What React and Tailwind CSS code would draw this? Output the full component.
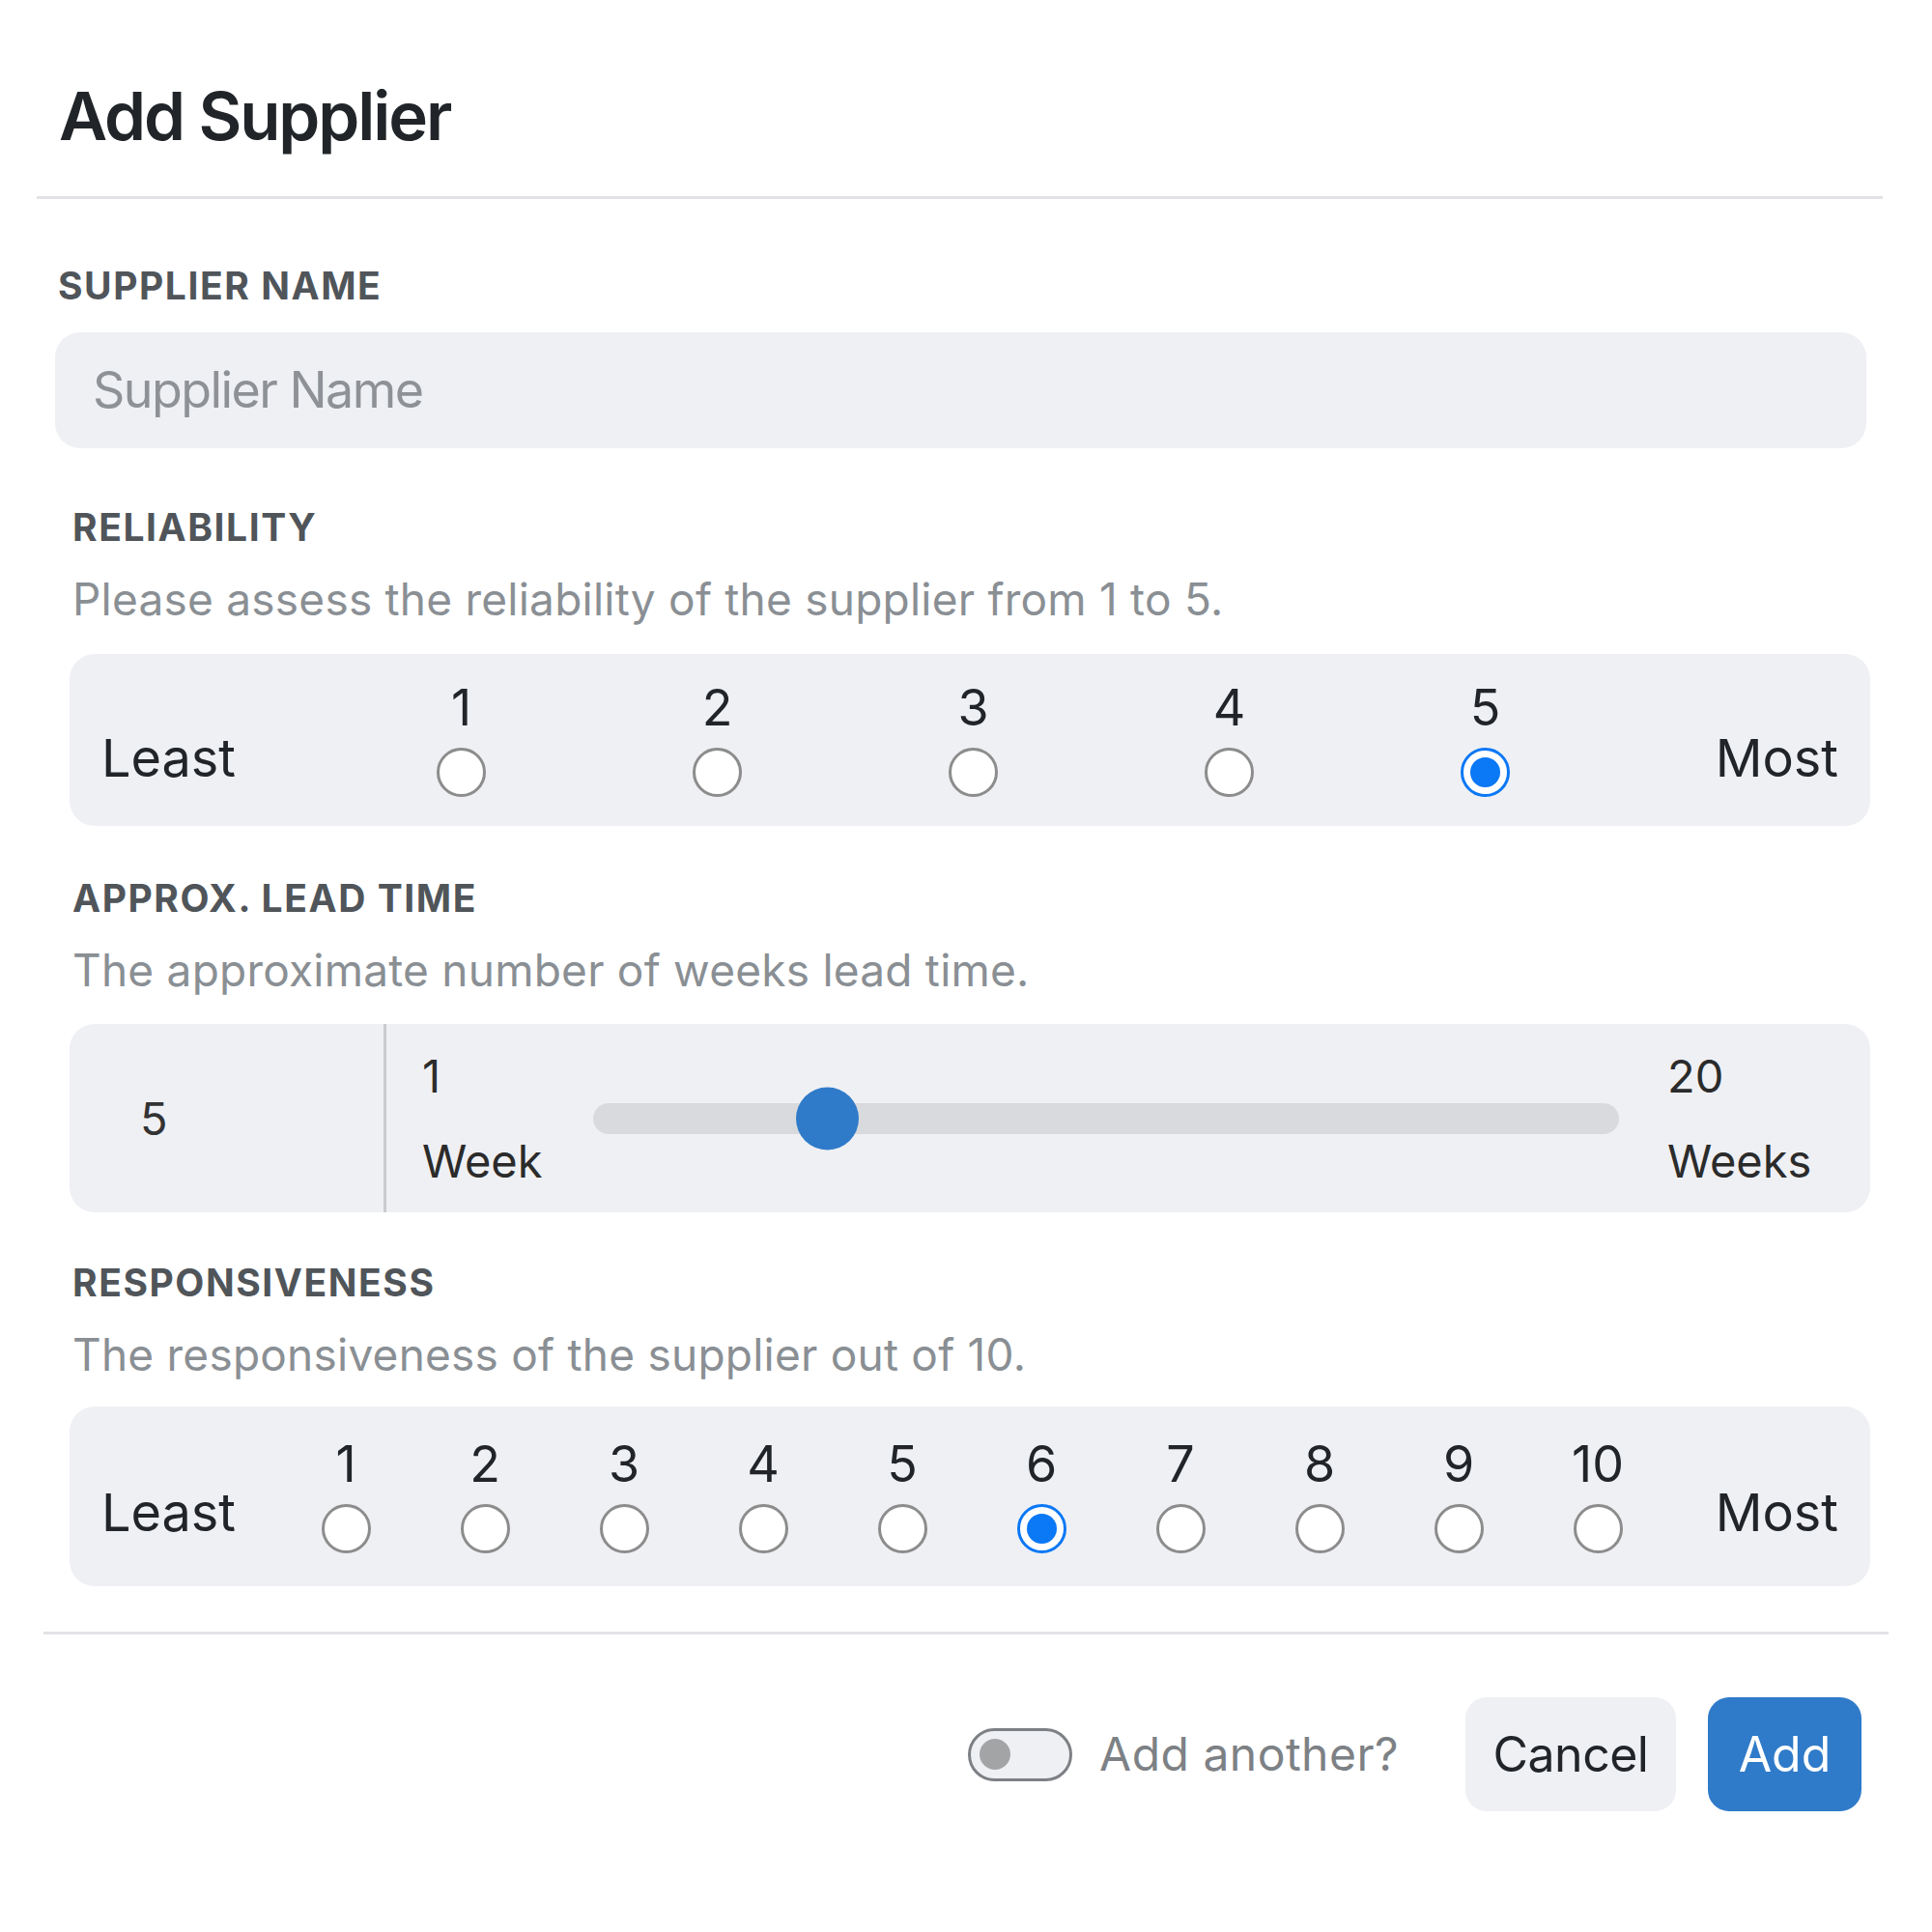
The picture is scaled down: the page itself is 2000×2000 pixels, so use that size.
import React from 'react';

const Radio = ({ checked }) =>
  checked ? (
    <span className="flex h-[51px] w-[51px] items-center justify-center rounded-full border-[3px] border-[#0b78f5] bg-white">
      <span className="h-[31px] w-[31px] rounded-full bg-[#0b78f5]" />
    </span>
  ) : (
    <span className="block h-[51px] w-[51px] rounded-full border-[3px] border-[#8c8c8c] bg-white" />
  );

function Scale({ count, value, boxClass, leastClass, colClass, offsetClass }) {
  const items = Array.from({ length: count }, (_, i) => i + 1);
  return (
    <div className={`flex items-center rounded-[26px] bg-[#eff0f4] pl-[33px] pr-[33px] ${boxClass}`}>
      <div className={`text-[54px] leading-none text-[#212529] ${leastClass} ${offsetClass}`}>Least</div>
      {items.map((n) => (
        <div key={n} className={`flex flex-col items-center gap-[15px] ${colClass}`}>
          <span className="text-[52px] leading-none text-[#212529]">{n}</span>
          <Radio checked={n === value} />
        </div>
      ))}
      <div className={`ml-auto text-[54px] leading-none text-[#212529] ${offsetClass}`}>Most</div>
    </div>
  );
}

const Label = ({ children, className = '' }) => (
  <div className={`pl-[3px] text-[39px] font-bold uppercase leading-none tracking-[0.04em] text-[#50555a] ${className}`}>
    {children}
  </div>
);

const Desc = ({ children }) => (
  <div className="mt-[32px] pl-[3px] text-[46px] leading-none tracking-[0.005em] text-[#8a8f94]">{children}</div>
);

export default function App() {
  return (
    <div className="h-[2000px] w-[2000px] bg-white font-['Inter',sans-serif]">
      {/* Header */}
      <div className="pl-[61px] pt-[86px]">
        <h1 className="text-[69px] font-semibold leading-none tracking-[-0.03em] text-[#212529]">Add Supplier</h1>
      </div>
      <div className="ml-[38px] mr-[51px] mt-[48px] border-t-[3px] border-[#e1e3e6]" />

      {/* Body */}
      <div className="pl-[57px] pr-[64px]">
        <Label className="mt-[70px]">Supplier Name</Label>
        <div className="mr-[4px] mt-[29px] flex h-[120px] items-center rounded-[26px] bg-[#eff0f4] pl-[39px]">
          <span className="text-[52px] leading-none tracking-[-0.03em] text-[#8e9297]">Supplier Name</span>
        </div>

        <div className="pl-[15px]">
          <Label className="mt-[62px]">Reliability</Label>
          <Desc>Please assess the reliability of the supplier from 1 to 5.</Desc>
          <div className="mt-[34px]">
            <Scale
              count={5}
              value={5}
              boxClass="h-[178px]"
              leastClass="w-[240px]"
              colClass="w-[265px]"
              offsetClass="pt-[38px]"
            />
          </div>

          <Label className="mt-[55px]">Approx. Lead Time</Label>
          <Desc>The approximate number of weeks lead time.</Desc>
          <div className="mt-[33px] flex h-[195px] rounded-[26px] bg-[#eff0f4]">
            <div className="flex w-[328px] items-center border-r-[3px] border-[#c9cbcf] pl-[73px] text-[47px] leading-none text-[#333]">
              5
            </div>
            <div className="flex flex-1 items-center pl-[37px] pr-[62px]">
              <div className="flex w-[127px] flex-col text-[47px] leading-[88px] text-[#2b2b2b]">
                <span>1</span>
                <span>Week</span>
              </div>
              <div className="relative mx-[50px] h-[32px] flex-1 rounded-full bg-[#d9dadd]">
                <div className="absolute left-[210px] top-1/2 h-[65px] w-[65px] -translate-y-1/2 rounded-full bg-[#2f7bc9]" />
              </div>
              <div className="flex w-[148px] flex-col text-[47px] leading-[88px] text-[#2b2b2b]">
                <span>20</span>
                <span>Weeks</span>
              </div>
            </div>
          </div>

          <Label className="mt-[53px]">Responsiveness</Label>
          <Desc>The responsiveness of the supplier out of 10.</Desc>
          <div className="mt-[31px]">
            <Scale
              count={10}
              value={6}
              boxClass="h-[186px]"
              leastClass="w-[181px]"
              colClass="w-[144px]"
              offsetClass="pt-[34px]"
            />
          </div>
        </div>
      </div>

      {/* Footer */}
      <div className="ml-[45px] mr-[45px] mt-[47px] border-t-[3px] border-[#e1e3e6]" />
      <div className="mt-[65px] flex items-center justify-end pr-[73px]">
        <div className="flex h-[55px] w-[108px] items-center rounded-full border-[3px] border-[#7d8085] bg-[#eff0f4] pl-[9px]">
          <span className="h-[32px] w-[32px] rounded-full bg-[#a3a4a6]" />
        </div>
        <span className="ml-[28px] text-[48px] leading-none tracking-[0.01em] text-[#7d8185]">Add another?</span>
        <button className="ml-[69px] h-[118px] w-[218px] rounded-[22px] bg-[#eff0f4] text-[50px] leading-none tracking-[-0.01em] text-[#212529]">
          Cancel
        </button>
        <button className="ml-[33px] h-[118px] w-[159px] rounded-[22px] bg-[#2f7bc9] text-[50px] leading-none text-white">
          Add
        </button>
      </div>
    </div>
  );
}
